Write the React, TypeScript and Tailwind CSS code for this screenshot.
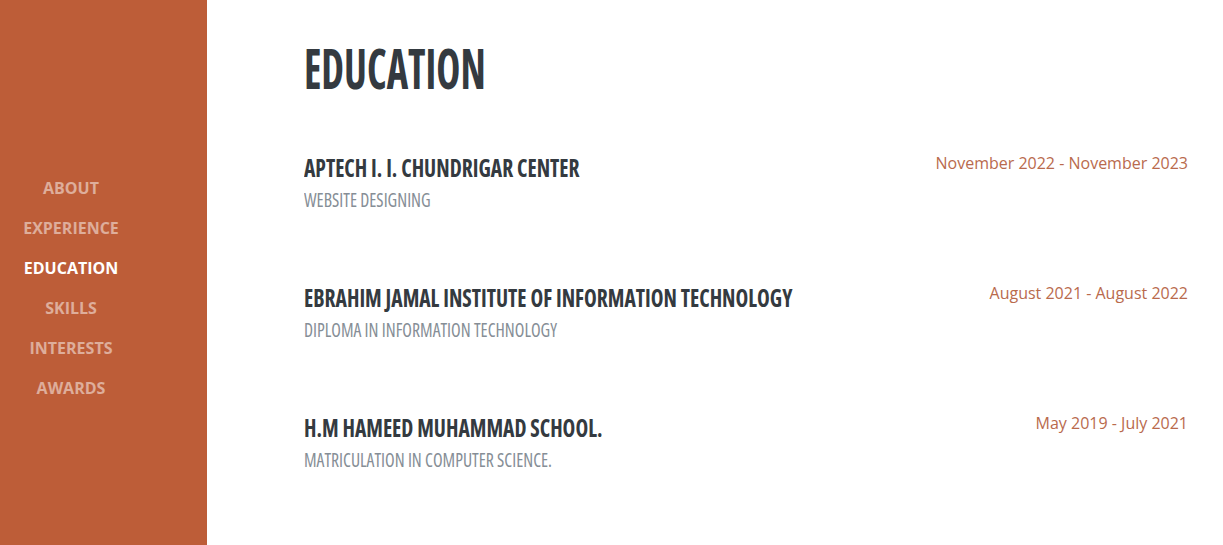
const navItems = [
  { label: "About" },
  { label: "Experience" },
  { label: "Education", active: true },
  { label: "Skills" },
  { label: "Interests" },
  { label: "Awards" },
];

const schools = [
  {
    name: "Aptech I. I. Chundrigar Center",
    course: "Website Designing",
    dates: "November 2022 - November 2023",
  },
  {
    name: "Ebrahim Jamal Institute of Information Technology",
    course: "Diploma in Information Technology",
    dates: "August 2021 - August 2022",
  },
  {
    name: "H.M Hameed Muhammad School.",
    course: "Matriculation in Computer Science.",
    dates: "May 2019 - July 2021",
  },
];

export default function App() {
  return (
    <div className="flex h-[545px] w-full bg-white font-['Open_Sans',sans-serif]">
      <nav className="w-[207px] shrink-0 bg-[#bd5d38] pt-[168px]">
        <ul className="flex w-[142px] flex-col items-center">
          {navItems.map((item) => (
            <li key={item.label} className="flex h-10 items-center">
              <a
                href="#"
                className={`text-[16px] font-bold uppercase ${
                  item.active ? "text-white" : "text-white/50"
                }`}
              >
                {item.label}
              </a>
            </li>
          ))}
        </ul>
      </nav>

      <main className="flex-1 pt-10 pr-[35px] pl-[97px]">
        <h2 className="origin-left scale-x-[0.74] text-[55px] leading-none font-bold text-[#343a40] uppercase [font-stretch:condensed]">
          Education
        </h2>

        <div className="mt-[60px] flex flex-col gap-[75px]">
          {schools.map((s) => (
            <div key={s.name} className="flex items-start justify-between">
              <div className="flex flex-col">
                <h3 className="origin-left scale-x-[0.862] text-[25px] leading-none font-bold whitespace-nowrap text-[#343a40] uppercase [font-stretch:condensed]">
                  {s.name}
                </h3>
                <div className="mt-[10px] origin-left scale-x-[0.885] text-[20px] leading-none whitespace-nowrap text-[#868e96] uppercase [font-stretch:condensed]">
                  {s.course}
                </div>
              </div>
              <div className="text-[16px] leading-none text-[#b96a4d]">{s.dates}</div>
            </div>
          ))}
        </div>
      </main>
    </div>
  );
}
